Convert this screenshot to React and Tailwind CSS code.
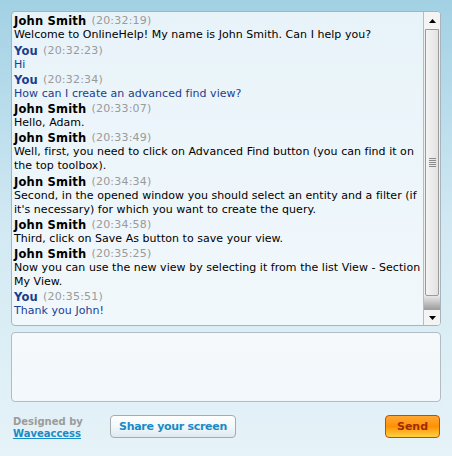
import React from 'react';

const messages = [
    { from: 'John Smith', time: '20:32:19', text: 'Welcome to OnlineHelp! My name is John Smith. Can I help you?' },
    { from: 'You', time: '20:32:23', text: 'Hi' },
    { from: 'You', time: '20:32:34', text: 'How can I create an advanced find view?' },
    { from: 'John Smith', time: '20:33:07', text: 'Hello, Adam.' },
    { from: 'John Smith', time: '20:33:49', text: 'Well, first, you need to click on Advanced Find button (you can find it on the top toolbox).' },
    { from: 'John Smith', time: '20:34:34', text: "Second, in the opened window you should select an entity and a filter (if it's necessary) for which you want to create the query." },
    { from: 'John Smith', time: '20:34:58', text: 'Third, click on Save As button to save your view.' },
    { from: 'John Smith', time: '20:35:25', text: 'Now you can use the new view by selecting it from the list View - Section My View.' },
    { from: 'You', time: '20:35:51', text: 'Thank you John!' },
];

const Scrollbar = () => (
    <div className="w-[17px] flex flex-col border-l border-[#b8bcc0] bg-[#f0f0f0]">
        {/* up arrow */}
        <div className="h-[17px] flex items-center justify-center bg-[#f4f4f4]">
            <svg width="7" height="4" viewBox="0 0 7 4"><path d="M3.5 0 L7 4 L0 4 Z" fill="#000" /></svg>
        </div>
        {/* thumb */}
        <div className="flex-1 flex flex-col">
            <div className="h-[267px] mx-[1px] rounded-b-[2px] border border-[#9a9a9a] bg-gradient-to-r from-[#f4f4f4] to-[#e2e2e2] flex items-center justify-center">
                <div className="flex flex-col gap-[1px]">
                    {[0, 1, 2, 3, 4].map(i => <div key={i} className="w-[7px] h-[1px] bg-[#8a8a8a]" />)}
                </div>
            </div>
            <div className="flex-1 bg-gradient-to-b from-[#e8e8e8] to-[#a0a0a0]" />
        </div>
        {/* down arrow */}
        <div className="h-[16px] flex items-center justify-center bg-[#f4f4f4] border-t border-[#a0a0a0]">
            <svg width="7" height="4" viewBox="0 0 7 4"><path d="M0 0 L7 0 L3.5 4 Z" fill="#000" /></svg>
        </div>
    </div>
);

export default function App() {
    return (
        <div
            className="w-[452px] h-[456px] bg-gradient-to-b from-[#a2d1e4] via-[#d2e9f3] to-[#e6f3f8] pt-[11px] px-[11px] text-[11px] leading-[14px]"
            style={{ fontFamily: '"DejaVu Sans", Verdana, sans-serif' }}
        >
            {/* Chat log */}
            <div className="h-[315px] w-[430px] flex rounded-[4px] border border-[#a9b3ba] bg-gradient-to-b from-[#e8f3f9] to-[#f1f8fc] overflow-hidden">
                <div className="flex-1 pl-[2px] pt-[1px]">
                    {messages.map((m, i) => (
                        <div key={i}>
                            <div className="h-[15.25px] flex items-end tracking-[0.2px]">
                                <span className={`font-bold text-[11.5px] ${m.from === 'You' ? 'text-[#1b3d8f]' : 'text-black'}`}>{m.from}</span>
                                <span className="text-[#9a9a9a] ml-[5px]">({m.time})</span>
                            </div>
                            <div className={`tracking-[0.04px] ${m.from === 'You' ? 'text-[#1b3d8f]' : 'text-black'}`}>{m.text}</div>
                        </div>
                    ))}
                </div>
                <Scrollbar />
            </div>

            {/* Input */}
            <div className="mt-[6px] h-[70px] w-[430px] rounded-[4px] border border-[#b2bcc2] bg-gradient-to-b from-[#f5f9fc] to-[#f2f8fb]" />

            {/* Footer */}
            <div className="mt-[13px] flex items-start pl-[2px] pr-[1px]">
                <div className="w-[97px] pt-[1px] text-[10px] leading-[12px] font-bold">
                    <div className="text-[#9b9b9b]">Designed by</div>
                    <div className="text-[#1a8ac6] underline">Waveaccess</div>
                </div>
                <button className="w-[126px] h-[23px] rounded-[4px] border border-[#a4acb2] bg-gradient-to-b from-[#ffffff] via-[#f2f8fb] to-[#dde9ef] text-[#1a8ac6] font-bold text-[11px] tracking-[-0.3px]">
                    Share your screen
                </button>
                <div className="flex-1" />
                <button className="w-[55px] h-[23px] rounded-[4px] border border-[#c24a12] bg-gradient-to-b from-[#ffa830] via-[#ff9000] to-[#ffd23c] text-[#a02c00] font-bold text-[11px]">
                    Send
                </button>
            </div>
        </div>
    );
}
